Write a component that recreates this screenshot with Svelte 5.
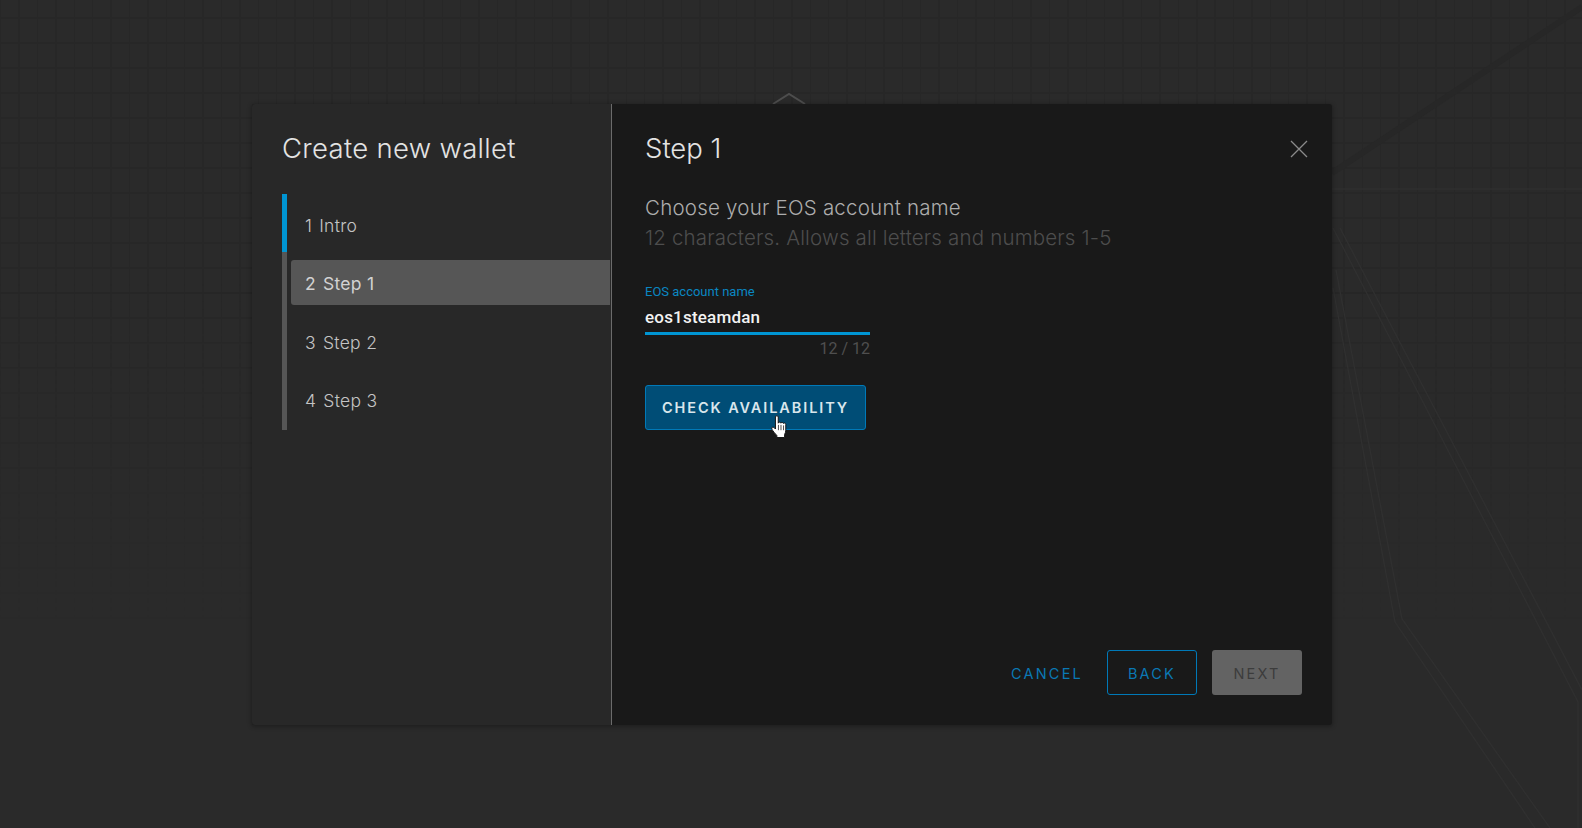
<script>
  const steps = [
    { n: 1, label: 'Intro' },
    { n: 2, label: 'Step 1', active: true },
    { n: 3, label: 'Step 2' },
    { n: 4, label: 'Step 3' }
  ];
</script>

<div class="page">
  <div class="grid"></div>
  <svg class="decor" width="1582" height="828" viewBox="0 0 1582 828" fill="none">
    <path d="M1582 7 L1332 173" stroke="#272727" stroke-width="6" />
    <path d="M1332 189 H1582" stroke="#2f2f2f" stroke-width="1.500" />
    <path d="M1333 228 L1578 702 V828" stroke="#303030" stroke-width="1.300" />
    <path d="M1340 228 L1582 690" stroke="#303030" stroke-width="1.300" />
    <path d="M1333 288 L1395 622 L1535 828" stroke="#303030" stroke-width="1.300" />
    <path d="M1336 270 L1402 619 L1550 828" stroke="#303030" stroke-width="1.300" />
    <path d="M773 104 L789 94 L805 104" stroke="#4d4d4d" stroke-width="2" />
  </svg>

  <section class="modal">
    <aside class="side">
      <h1>Create new wallet</h1>
      <ol class="stepper">
        {#each steps as s}
          <li class:active={s.active}><span class="num">{s.n}</span><span>{s.label}</span></li>
        {/each}
      </ol>
    </aside>

    <main class="content">
      <header class="head">
        <h2>Step 1</h2>
        <button class="close" aria-label="Close">
          <svg width="18" height="18" viewBox="0 0 18 18" fill="none" stroke="#8a8a8a" stroke-width="1.3"><path d="M1 1 L17 17 M17 1 L1 17" /></svg>
        </button>
      </header>

      <p class="lead">Choose your EOS account name</p>
      <p class="hint">12 characters. Allows all letters and numbers 1-5</p>

      <div class="field">
        <span class="label">EOS account name</span>
        <span class="value">eos1steamdan</span>
        <span class="count">12 / 12</span>
      </div>

      <div class="check-wrap">
        <button class="check">CHECK AVAILABILITY</button>
        <svg class="cursor" width="17" height="24" viewBox="0 0 16 22">
          <path d="M4.2 1.6c0-1.6 2.6-1.6 2.6 0V7.4c.2-1.3 2.3-1.3 2.5 0 .2-1 2.2-1 2.4.3.3-.8 2.1-.6 2.2.8V14c0 1.600-.5 2.800-1.100 4v2.900H5.500V19C4.200 17.500 1.500 14.500 .8 13c-.6-1.500 1-2.500 2-1.500l1.400 1.400z" fill="#fff" stroke="#111" stroke-width=".9" />
          <path d="M7 9v5M9.400 9v5M11.800 9.500V14" stroke="#111" stroke-width=".7" />
        </svg>
      </div>

      <footer class="actions">
        <button class="btn link">CANCEL</button>
        <button class="btn outline">BACK</button>
        <button class="btn disabled">NEXT</button>
      </footer>
    </main>
  </section>
</div>

<style>
  :global(body) {
    margin: 0;
    background: #2a2a2a;
  }
  .page {
    position: relative;
    height: 828px;
    overflow: hidden;
    background: #2a2a2a;
    box-sizing: border-box;
    padding: 104px 250px 0 252px;
    font-family: Inter, "Liberation Sans", sans-serif;
  }
  .grid {
    position: absolute;
    inset: 0 0 auto 0;
    height: 620px;
    background-image:
      repeating-linear-gradient(90deg, #272727 0 1.5px, transparent 1.5px 18.4px),
      repeating-linear-gradient(180deg, transparent 0 17px, #272727 17px 19px, transparent 19px 25px);
    -webkit-mask-image: linear-gradient(180deg, #000 0 45%, transparent 100%);
    mask-image: linear-gradient(180deg, #000 0 45%, transparent 100%);
  }
  .decor {
    position: absolute;
    left: 0;
    top: 0;
  }
  .modal {
    position: relative;
    display: flex;
    width: 1080px;
    height: 621px;
    background: #191919;
    border-radius: 3px;
    box-shadow: 0 1px 4px 1px rgba(0, 0, 0, 0.28);
    overflow: hidden;
  }
  .side {
    width: 360px;
    flex: none;
    box-sizing: border-box;
    background: #282828;
    border-right: 1px solid #6b6b6b;
    padding: 26px 0 0 30px;
  }
  h1 {
    margin: 0;
    font-size: 27.500px;
    line-height: 36px;
    font-weight: 300;
    color: #e3e3e3;
    letter-spacing: 0.3px;
  }
  .stepper {
    list-style: none;
    margin: 28px 0 0;
    padding: 0 0 0 4px;
    height: 236px;
    box-sizing: border-box;
    border-left: 5px solid #565656;
    display: flex;
    flex-direction: column;
    gap: 13.500px;
    position: relative;
  }
  .stepper::before {
    content: '';
    position: absolute;
    left: -5px;
    top: 0;
    width: 5px;
    height: 58px;
    background: #0095d3;
  }
  .stepper li {
    height: 45px;
    box-sizing: border-box;
    display: flex;
    align-items: center;
    gap: 7px;
    padding: 2px 0 0 14px;
    font-size: 17.500px;
    letter-spacing: 0.3px;
    font-weight: 300;
    color: #c4c4c4;
    border-radius: 3px 0 0 3px;
    margin-right: 1px;
  }
  .stepper li:first-child {
    margin-top: 7.500px;
  }
  .stepper li.active {
    background: #565656;
    color: #d2d2d2;
    font-weight: 400;
  }
  .content {
    flex: 1;
    min-width: 0;
    display: flex;
    flex-direction: column;
    padding: 26px 30px 30px 33px;
    box-sizing: border-box;
  }
  .head {
    display: flex;
    justify-content: space-between;
    align-items: center;
    height: 36px;
  }
  h2 {
    margin: 0;
    font-size: 27.500px;
    font-weight: 300;
    color: #e3e3e3;
  }
  .close {
    all: unset;
    display: flex;
    margin: 2px -6px 0 0;
  }
  .lead,
  .hint {
    margin: 0;
    font-size: 20.500px;
    line-height: 30px;
    font-weight: 300;
  }
  .lead {
    margin-top: 27px;
    color: #adadad;
    letter-spacing: 0.22px;
  }
  .hint {
    color: #4d4d4d;
    letter-spacing: 0.17px;
  }
  .field {
    width: 225px;
    margin-top: 32px;
    display: flex;
    flex-direction: column;
    font-family: Roboto, sans-serif;
  }
  .label {
    font-size: 13px;
    line-height: 14px;
    color: #0a87c2;
  }
  .value {
    font-size: 17px;
    letter-spacing: 0.2px;
    font-weight: 500;
    line-height: 20px;
    margin-top: 8px;
    padding-bottom: 5px;
    color: #f2f2f2;
    border-bottom: 3px solid #0095d3;
  }
  .count {
    text-align: right;
    font-size: 16px;
    line-height: 20px;
    margin-top: 4px;
    color: #4f4f4f;
  }
  .check-wrap {
    position: relative;
    align-self: flex-start;
    margin-top: 26px;
  }
  .check {
    width: 221px;
    height: 45px;
    background: #004d76;
    border: 1px solid #0079b8;
    border-radius: 3px;
    color: #d9e6ec;
    font-family: inherit;
    font-size: 14.500px;
    font-weight: 600;
    letter-spacing: 1.900px;
    padding: 0;
    display: block;
  }
  .cursor {
    position: absolute;
    left: 126px;
    top: 30px;
  }
  .actions {
    margin-top: auto;
    display: flex;
    justify-content: flex-end;
    gap: 15px;
  }
  .btn {
    width: 90px;
    height: 45px;
    box-sizing: border-box;
    border-radius: 3px;
    border: 1px solid transparent;
    background: none;
    font-family: inherit;
    font-size: 14.500px;
    font-weight: 400;
    letter-spacing: 2.200px;
    padding: 1px 0 0;
  }
  .link {
    color: #0a78b4;
    width: 96px;
    margin-right: -3px;
    margin-left: -1px;
  }
  .outline {
    color: #0a78b4;
    border-color: #0079b8;
  }
  .disabled {
    color: #3c3c3c;
    background: #636363;
  }
</style>
